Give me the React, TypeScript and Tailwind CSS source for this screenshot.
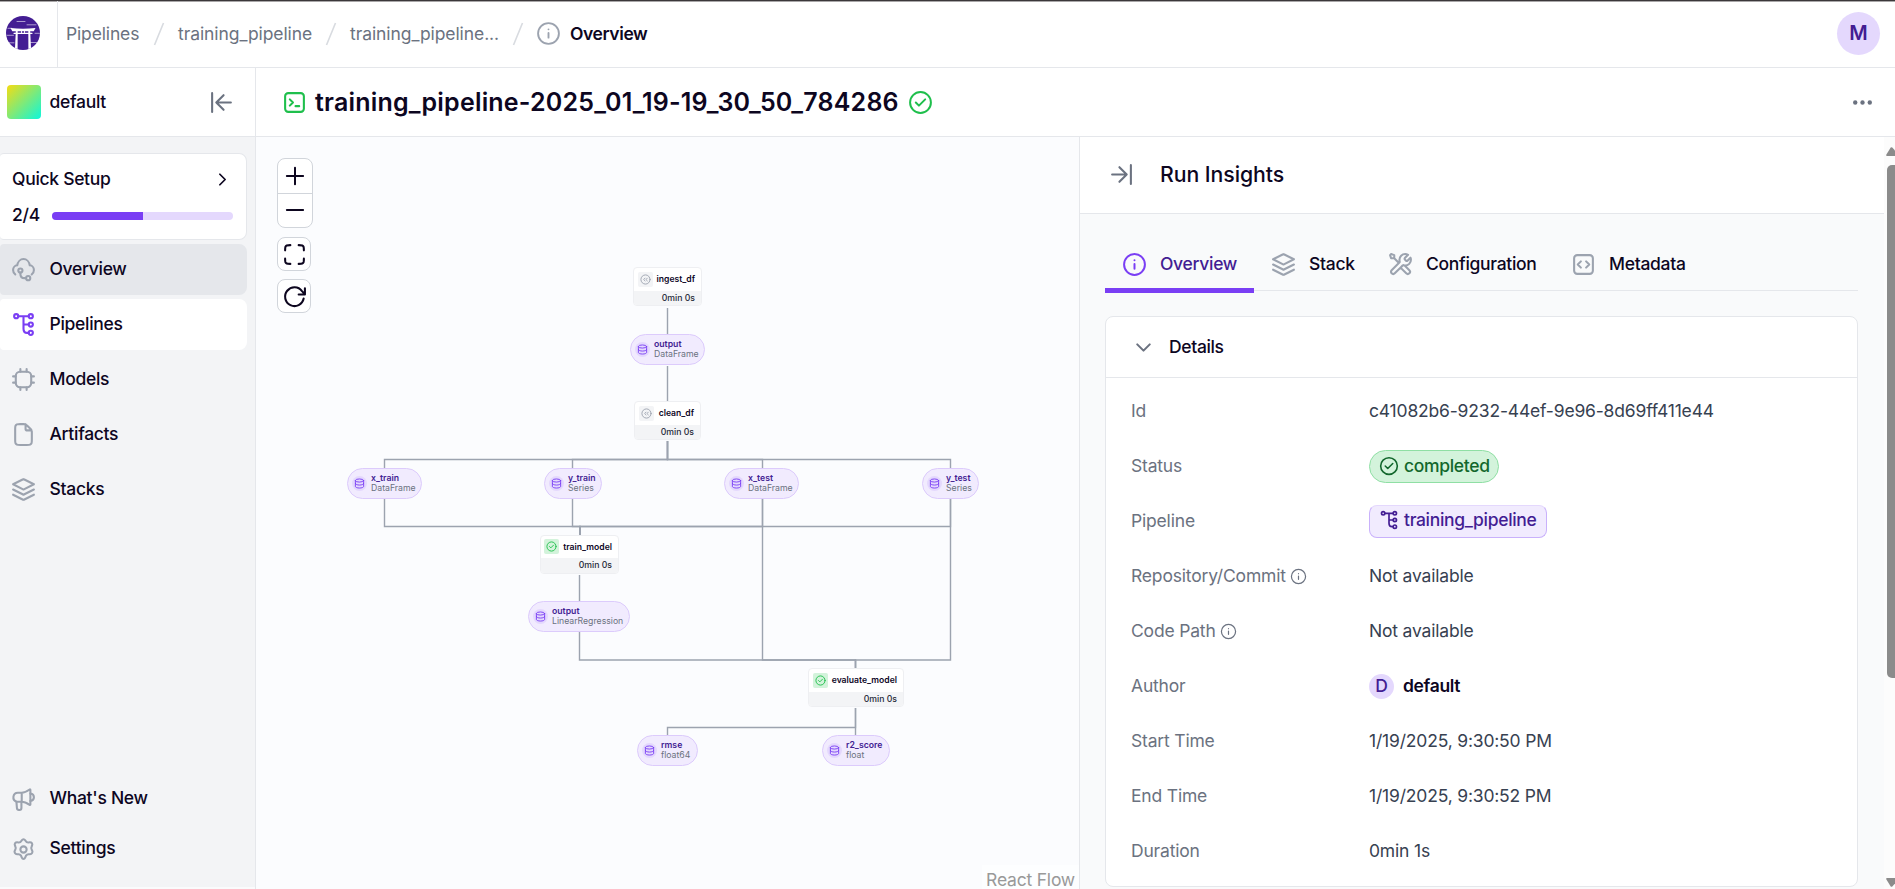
import React from "react";

type IconProps = { className?: string; children?: React.ReactNode; sw?: number };

function Icon({ className, children, sw = 2 }: IconProps) {
  return (
    <svg
      viewBox="0 0 24 24"
      fill="none"
      stroke="currentColor"
      strokeWidth={sw}
      strokeLinecap="round"
      strokeLinejoin="round"
      className={`shrink-0 overflow-visible ${className ?? ""}`}
    >
      {children}
    </svg>
  );
}

const Info = ({ className, sw }: IconProps) => (
  <Icon className={className} sw={sw}>
    <circle cx="12" cy="12" r="10" />
    <path d="M12 16v-4.5M12 8h.01" />
  </Icon>
);
const CheckCircle = ({ className, sw }: IconProps) => (
  <Icon className={className} sw={sw}>
    <circle cx="12" cy="12" r="10" />
    <path d="M7.5 12l3 3 6-6" />
  </Icon>
);
const Layers = ({ className }: IconProps) => (
  <Icon className={className}>
    <path d="M2 12l9.64 4.82c.13.07.2.1.27.11.06.01.12.01.18 0 .07-.01.14-.04.27-.11L22 12M2 17l9.64 4.82c.13.07.2.1.27.11.06.01.12.01.18 0 .07-.01.14-.04.27-.11L22 17M2 7l9.64-4.82c.13-.07.2-.1.27-.11.06-.01.12-.01.18 0 .07.01.14.04.27.11L22 7l-9.64 4.82c-.13.07-.2.1-.27.11a.5.5 0 0 1-.18 0c-.07-.01-.14-.04-.27-.11L2 7z" />
  </Icon>
);
const Dataflow = ({ className }: IconProps) => (
  <Icon className={className}>
    <path d="M7 4h10M12 4v12c0 2.6 1 4 3.5 4H17M12 12h5" />
    <circle cx="5" cy="4" r="2" />
    <circle cx="19" cy="4" r="2" />
    <circle cx="19" cy="12" r="2" />
    <circle cx="19" cy="20" r="2" />
  </Icon>
);
const Cloud = ({ className }: IconProps) => (
  <Icon className={className}>
    <path d="M4.1 16.6C2.8 15.7 2 14.2 2 12.5 2 10.2 3.7 8.2 6 8c.5-3.4 3-6 6-6s5.5 2.6 6 6c2.3.2 4 2.2 4 4.5 0 1.7-.8 3.2-2.1 4.1" />
    <circle cx="9" cy="13" r="2" />
    <circle cx="16.5" cy="20.3" r="2" />
    <path d="M9 15v1.3c0 2.6 1.4 4 4 4h1.5" />
  </Icon>
);
const Chip = ({ className }: IconProps) => (
  <Icon className={className}>
    <rect x="4.6" y="4.6" width="14.8" height="14.8" rx="4" />
    <path d="M9 2v2.5M15 2v2.5M9 19.5V22M15 19.5V22M2 9h2.5M2 15h2.5M19.5 9H22M19.5 15H22" />
  </Icon>
);
const File = ({ className }: IconProps) => (
  <Icon className={className}>
    <path d="M14 2.27V6.4c0 .56 0 .84.11 1.05.1.19.25.35.44.44.21.11.49.11 1.05.11h4.13M20 9.99V17.2c0 1.68 0 2.52-.33 3.16a3 3 0 0 1-1.31 1.31c-.64.33-1.48.33-3.16.33H8.8c-1.68 0-2.52 0-3.16-.33a3 3 0 0 1-1.31-1.31C4 19.72 4 18.88 4 17.2V6.8c0-1.68 0-2.52.33-3.16a3 3 0 0 1 1.31-1.31C6.28 2 7.12 2 8.8 2h3.21c.74 0 1.1 0 1.45.08.3.08.6.2.86.36.31.19.57.45 1.09.96l3.18 3.18c.52.52.78.78.96 1.09.17.26.29.55.36.86.09.35.09.72.09 1.46z" />
  </Icon>
);
const Tool = ({ className }: IconProps) => (
  <Icon className={className}>
    <path d="M6 6L10.5 10.5M6 6H3L2 3L3 2L6 3V6ZM19.259 2.741L16.6314 5.3686C16.2354 5.7646 16.0373 5.9626 15.9632 6.191C15.8979 6.3918 15.8979 6.6082 15.9632 6.809C16.0373 7.0373 16.2354 7.2353 16.6314 7.6314L16.8686 7.8686C17.2646 8.2646 17.4627 8.4626 17.691 8.5368C17.8918 8.6021 18.1082 8.6021 18.309 8.5368C18.5373 8.4626 18.7354 8.2646 19.1314 7.8686L21.5893 5.4108C21.854 6.0549 22 6.7604 22 7.5C22 10.5376 19.5376 13 16.5 13C16.1338 13 15.7759 12.9642 15.4298 12.8959C14.9436 12.8001 14.7005 12.7521 14.5532 12.7668C14.3965 12.7824 14.3193 12.8059 14.1805 12.8802C14.0499 12.9501 13.919 13.081 13.657 13.343L6.5 20.5C5.6716 21.3284 4.3284 21.3284 3.5 20.5C2.6716 19.6716 2.6716 18.3284 3.5 17.5L10.657 10.343C10.919 10.081 11.0499 9.95 11.1198 9.8195C11.1941 9.6807 11.2176 9.6035 11.2332 9.4468C11.2479 9.2995 11.1999 9.0564 11.1041 8.5702C11.0358 8.2241 11 7.8662 11 7.5C11 4.4624 13.4624 2 16.5 2C17.5055 2 18.448 2.2698 19.259 2.741ZM12 15L17.5 20.5C18.3284 21.3283 19.6716 21.3283 20.5 20.5C21.3284 19.6715 21.3284 18.3283 20.5 17.5L15.9753 12.9753C15.655 12.945 15.3427 12.8872 15.0408 12.8043C14.6517 12.6975 14.2249 12.7751 13.9397 13.0603L12 15Z" />
  </Icon>
);
const CodeSquare = ({ className }: IconProps) => (
  <Icon className={className}>
    <rect x="3" y="3" width="18" height="18" rx="3" />
    <path d="M14.5 15L17.5 12L14.5 9M9.5 9L6.5 12L9.5 15" />
  </Icon>
);
const Terminal = ({ className }: IconProps) => (
  <Icon className={className}>
    <rect x="3" y="3" width="18" height="18" rx="3" />
    <path d="M7.5 15L10.5 12L7.5 9M13 15.5h3.5" />
  </Icon>
);
const Megaphone = ({ className }: IconProps) => (
  <Icon className={className}>
    <path d="M10.3 5.5H6.6a4.4 4.4 0 0 0-1.2 8.6h4.9M10.3 5.5c2.6 0 5.2-1.4 7.6-3.1.3-.2.7 0 .7.4v13.9c0 .4-.4.6-.7.4-2.4-1.6-5-3-7.6-3M10.3 5.5v8.6" />
    <path d="M18.6 6.3c2 .3 3.4 1.7 3.4 3.5s-1.4 3.2-3.4 3.5M5.2 14.1l.5 6.2c.1 1 .8 1.7 1.8 1.7h.7c1 0 1.8-.8 1.8-1.8v-6" />
  </Icon>
);
const Gear = ({ className }: IconProps) => (
  <Icon className={className}>
    <circle cx="12" cy="12" r="3" />
    <path d="M10.4 3.1c.8-1.3 2.4-1.3 3.2 0l.5.8c.6 1 1.7 1.5 2.9 1.3l.9-.1c1.8-.2 3.1 1.5 2.3 3.1l-.4.9c-.5 1-.5 2.2.1 3.2l.4.7c.9 1.6-.3 3.6-2.2 3.5l-1 0c-1.1-.1-2.1.5-2.7 1.4l-.8 1.9c-.7 1.6-2.5 1.6-3.2 0l-.8-1.9c-.6-.9-1.6-1.5-2.7-1.4l-1 0c-1.9.1-3.1-1.9-2.2-3.5l.4-.7c.6-1 .6-2.2.1-3.2l-.4-.9c-.8-1.6.5-3.3 2.3-3.1l.9.1c1.2.2 2.3-.3 2.9-1.3z" />
  </Icon>
);
const Database = ({ className }: IconProps) => (
  <Icon className={className}>
    <ellipse cx="12" cy="5.5" rx="9" ry="3.4" />
    <path d="M21 5.5v13c0 1.9-4 3.4-9 3.4s-9-1.5-9-3.4V5.5M21 12c0 1.9-4 3.4-9 3.4S3 13.9 3 12" />
  </Icon>
);
const CachedCircle = ({ className }: IconProps) => (
  <Icon className={className} sw={2}>
    <circle cx="12" cy="12" r="10" />
    <path d="M11 9l-3 3 3 3M16 9l-3 3 3 3" />
  </Icon>
);

function Logo() {
  return (
    <svg viewBox="0 0 34 34" className="h-[34px] w-[34px] shrink-0">
      <circle cx="17" cy="17" r="17" fill="#431d93" />
      <g stroke="#ffffff" fill="none" strokeLinecap="round">
        <path
          d="M11 5.5h8M21 8.8h9M2 12.3h3.5M29 17.3h4.5M1 19.3h6.5M2 26.8h6M24.5 26.5h6"
          strokeWidth="0.7"
          opacity="0.8"
        />
        <path d="M8 17.3h18" strokeWidth="1.2" />
      </g>
      <path d="M4.5 12Q17 13.4 29.5 12l-1.8 3.3H6.3z" fill="#ffffff" />
      <path d="M9.8 15h1.9l-.1 18.1-2.6-.9zM22.3 15h1.9l.8 17.2-2.6.9z" fill="#ffffff" />
      <path d="M15 15h.9v2.4H15zM18.1 15h.9v2.4h-.9z" fill="#ffffff" />
    </svg>
  );
}

const Slash = () => (
  <svg viewBox="0 0 12 24" className="h-6 w-3 shrink-0" stroke="#d8dbe0" strokeWidth="1.6" fill="none">
    <path d="M1.5 23L10.5 1" />
  </svg>
);

function TopBar() {
  return (
    <header className="flex h-[68px] shrink-0 items-center border-b border-t border-b-[#e5e7eb] border-t-[#3b383a] bg-white shadow-[inset_0_1px_0_#a9a7a8]">
      <div className="flex h-full w-[58px] items-center border-r border-[#e5e7eb] pb-0.5 pl-1.5">
        <Logo />
      </div>
      <nav className="flex flex-1 items-center pb-px pl-2 text-[17.5px] leading-6 tracking-[-0.08px] text-[#6b7280]">
        <span className="w-[87px] tracking-[-0.15px]">Pipelines</span>
        <Slash />
        <span className="ml-[13px] w-[147px]">training_pipeline</span>
        <Slash />
        <span className="ml-[13px] w-[162px]">training_pipeline...</span>
        <Slash />
        <Info className="ml-3 h-[25px] w-[25px] text-[#9ca3af]" sw={1.8} />
        <span className="ml-[9px] font-semibold tracking-[-0.4px] text-[#0d061f]">Overview</span>
      </nav>
      <div className="mb-px mr-[15px] flex h-[43px] w-[43px] items-center justify-center rounded-full bg-[#e4d8fd] pb-px text-[20px] font-semibold text-[#431d93]">
        M
      </div>
    </header>
  );
}

const navItems = [
  { label: "Overview", icon: Cloud, row: "bg-[#e5e7eb]", tint: "text-[#9ca3af]" },
  { label: "Pipelines", icon: Dataflow, row: "bg-white", tint: "text-[#7a3ef4]" },
  { label: "Models", icon: Chip, row: "", tint: "text-[#9ca3af]" },
  { label: "Artifacts", icon: File, row: "", tint: "text-[#9ca3af]" },
  { label: "Stacks", icon: Layers, row: "", tint: "text-[#9ca3af]" },
];

function Sidebar() {
  return (
    <aside className="flex w-64 shrink-0 flex-col border-r border-[#e5e7eb] bg-[#f3f4f6] text-[17.5px] font-medium leading-6 tracking-[-0.3px] text-[#0d061f]">
      <div className="flex h-[69px] shrink-0 items-center border-b border-[#e5e7eb] bg-white pl-[7px] pr-[21px]">
        <div className="h-[34px] w-[34px] rounded bg-[linear-gradient(135deg,#f5dc12,#0cf7dc)]" />
        <span className="ml-[8.5px] flex-1 pb-px">default</span>
        <Icon className="h-[25px] w-[25px] text-[#6b7280]">
          <path d="M3 3v18M21 12H7M14 5l-7 7 7 7" />
        </Icon>
      </div>
      <div className="mt-4 flex h-[87px] w-[247px] shrink-0 flex-col justify-between rounded-l-sm rounded-r-lg border border-l-0 border-[#e5e7eb] bg-white pb-3 pl-3 pr-[13px] pt-[13px]">
        <div className="flex items-center justify-between">
          <span>Quick Setup</span>
          <Icon className="h-[21px] w-[21px]">
            <path d="M9 18l6-6-6-6" />
          </Icon>
        </div>
        <div className="flex items-center">
          <span className="w-10">2/4</span>
          <div className="mt-px h-2 flex-1 overflow-hidden rounded-full bg-[#e4d8fd]">
            <div className="h-full w-1/2 bg-[#7a3ef4]" />
          </div>
        </div>
      </div>
      <nav className="mt-1 flex w-[247px] flex-1 flex-col gap-1">
        {navItems.map(({ label, icon: I, row, tint }) => (
          <a key={label} className={`flex h-[51px] items-center rounded-l-sm rounded-r-lg pl-[11px] ${row}`}>
            <I className={`h-[25px] w-[25px] ${tint}`} />
            <span className="ml-[13.5px] pb-px">{label}</span>
          </a>
        ))}
      </nav>
      <div className="flex flex-col pb-[13px]">
        <a className="flex h-[50px] items-center pl-[11px]">
          <Megaphone className="h-[25px] w-[25px] text-[#9ca3af]" />
          <span className="ml-[13.5px] pb-0.5">What&apos;s New</span>
        </a>
        <a className="flex h-[50px] items-center pl-[11px]">
          <Gear className="h-[25px] w-[25px] text-[#9ca3af]" />
          <span className="ml-[13.5px] pb-0.5">Settings</span>
        </a>
      </div>
      <div className="h-0.5 bg-[#fafbfc]" />
    </aside>
  );
}

// Diagram coordinates are relative to the top-left corner of the canvas.
const steps = [
  { name: "ingest_df", x: 377, y: 130, w: 69, cached: true },
  { name: "clean_df", x: 378, y: 264, w: 67, cached: true },
  { name: "train_model", x: 283.5, y: 397.5, w: 79.5, cached: false },
  { name: "evaluate_model", x: 552, y: 531, w: 96, cached: false },
];

const artifacts = [
  { name: "output", type: "DataFrame", x: 374, y: 197, w: 75 },
  { name: "x_train", type: "DataFrame", x: 91, y: 330.5, w: 75 },
  { name: "y_train", type: "Series", x: 288, y: 330.5, w: 58 },
  { name: "x_test", type: "DataFrame", x: 468, y: 330.5, w: 75 },
  { name: "y_test", type: "Series", x: 666, y: 330.5, w: 57 },
  { name: "output", type: "LinearRegression", x: 272, y: 464, w: 102 },
  { name: "rmse", type: "float64", x: 381, y: 598, w: 61 },
  { name: "r2_score", type: "float", x: 566, y: 598, w: 68 },
];

const edges = [
  "M411.5 171V197",
  "M411.5 229V264",
  "M411.5 304V322.5H128.5V331",
  "M411.5 304V322.5H316.5V331",
  "M411.5 304V322.5H506.5V331",
  "M411.5 304V322.5H694.5V331",
  "M128.5 362V389.5H324V398",
  "M316.5 362V389.5H324V398",
  "M506.5 362V389.5H324V398",
  "M694.5 362V389.5H324V398",
  "M323.5 438V464",
  "M323.5 494V523H599.5V531",
  "M506.5 362V523H599.5V531",
  "M694.5 362V523H599.5V531",
  "M599.5 571V598",
  "M599.5 571V590.5H411.5V598",
];

function Graph() {
  return (
    <section className="relative flex w-[823px] shrink-0 flex-col overflow-hidden bg-[#fbfcfe]">
      <div className="flex w-[57px] flex-col gap-2 pl-[21px] pt-[21px] text-[#0d061f]">
        <div className="mb-px flex h-[70px] w-9 flex-col overflow-hidden rounded-lg border border-[#d1d5db] bg-white">
          <button className="flex flex-1 items-center justify-center border-b border-[#d1d5db]">
            <Icon className="h-[26px] w-[26px]" sw={1.9}>
              <path d="M12 4.5v15M4.5 12h15" />
            </Icon>
          </button>
          <button className="flex flex-1 items-center justify-center">
            <Icon className="h-[26px] w-[26px]" sw={1.9}>
              <path d="M4.5 12h15" />
            </Icon>
          </button>
        </div>
        <button className="flex h-[34px] w-[34px] items-center justify-center rounded-lg border border-[#d1d5db] bg-white">
          <Icon className="h-[25px] w-[25px]" sw={2}>
            <path d="M8 3h-.2c-1.7 0-2.5 0-3.2.3a3 3 0 0 0-1.3 1.3C3 5.3 3 6.1 3 7.8V8M8 21h-.2c-1.7 0-2.5 0-3.2-.3a3 3 0 0 1-1.3-1.3C3 18.7 3 17.9 3 16.2V16M21 8v-.2c0-1.7 0-2.5-.3-3.2a3 3 0 0 0-1.3-1.3C18.7 3 17.9 3 16.2 3H16M21 16v.2c0 1.7 0 2.5-.3 3.2a3 3 0 0 1-1.3 1.3c-.7.3-1.5.3-3.2.3H16" />
          </Icon>
        </button>
        <button className="flex h-[34px] w-[34px] items-center justify-center rounded-lg border border-[#d1d5db] bg-white">
          <Icon className="h-[25px] w-[25px]" sw={2}>
            <path d="M22 4v6h-6M22 10l-2.8-3.2A9 9 0 1 0 20.8 14" />
          </Icon>
        </button>
      </div>

      <svg viewBox="0 0 823 752" className="pointer-events-none absolute left-0 top-0 h-[752px] w-[823px]">
        {edges.map((d) => (
          <path key={d} d={d} fill="none" stroke="#9ca3af" strokeWidth="1.4" />
        ))}
      </svg>

      {steps.map((s) => (
        <div
          key={s.name}
          className="absolute flex h-[39px] flex-col overflow-hidden rounded-[4px] border border-[#eeeff2] bg-white"
          style={{ left: s.x, top: s.y, width: s.w }}
        >
          <div className="flex flex-1 items-center justify-between pl-[3.5px] pr-[6px]">
            <span
              className={
                s.cached
                  ? "flex h-[15px] w-[15px] items-center justify-center rounded-[2px] bg-[#f3f4f6] text-[#9ca3af]"
                  : "flex h-[15px] w-[15px] items-center justify-center rounded-[2px] bg-[#d3f3db] text-[#1fbf4c]"
              }
            >
              {s.cached ? <CachedCircle className="h-[11px] w-[11px]" /> : <CheckCircle className="h-[11px] w-[11px]" sw={2} />}
            </span>
            <span className="text-[8.6px] font-semibold leading-[12px] text-[#0d061f]">{s.name}</span>
          </div>
          <div className="flex h-[14.5px] items-center justify-end bg-[#f3f4f6] pr-[6px] text-[8.7px] font-medium leading-[12px] text-[#1f2937]">
            0min 0s
          </div>
        </div>
      ))}

      {artifacts.map((a) => (
        <div
          key={a.name + a.x}
          className="absolute flex h-[31px] items-center rounded-full border border-[#dccbfc] bg-[#f1ebfe] pl-[4px]"
          style={{ left: a.x, top: a.y, width: a.w }}
        >
          <span className="flex h-[15px] w-[15px] shrink-0 items-center justify-center rounded-full bg-[#e4d8fd] text-[#7a3ef4]">
            <Database className="h-[11px] w-[11px]" />
          </span>
          <span className="ml-[4px] flex flex-col pb-px text-[8.7px] leading-[10px]">
            <span className="font-semibold text-[#431d93]">{a.name}</span>
            <span className="text-[#6b7280]">{a.type}</span>
          </span>
        </div>
      ))}

      <div className="absolute bottom-0 right-0 h-6 bg-white/50 pl-1 pr-1 text-[17.5px] leading-[30px] tracking-[-0.2px] text-[#999999]">
        React Flow
      </div>
    </section>
  );
}

const tabs = [
  { label: "Overview", icon: Info, active: true, w: "w-[149px]" },
  { label: "Stack", icon: Layers, active: false, w: "w-[117px]" },
  { label: "Configuration", icon: Tool, active: false, w: "w-[183px]" },
  { label: "Metadata", icon: CodeSquare, active: false, w: "w-[150px]" },
];

function Row({ label, info, children }: { label: string; info?: boolean; children: React.ReactNode }) {
  return (
    <div className="flex h-[55px] items-center">
      <dt className="flex w-[238px] items-center gap-1 pb-px text-[#6b7280]">
        {label}
        {info && <Info className="h-[17px] w-[17px]" sw={1.7} />}
      </dt>
      <dd className="flex items-center pb-px text-[#374151]">{children}</dd>
    </div>
  );
}

function Insights() {
  return (
    <section className="flex min-w-0 flex-1 border-l border-[#e5e7eb] bg-[#f9fafb] text-[17.5px] leading-6 tracking-[-0.18px] text-[#0d061f]">
      <div className="flex w-[804px] shrink-0 flex-col">
        <div className="flex h-[77px] shrink-0 items-center border-b border-[#e5e7eb] bg-white pb-px pl-[29px]">
          <Icon className="h-[25px] w-[25px] text-[#6b7280]">
            <path d="M21 3v18M3 12h14M10 5l7 7-7 7" />
          </Icon>
          <h2 className="ml-[26px] pb-px text-[21.25px] font-medium leading-8 tracking-[-0.05px]">Run Insights</h2>
        </div>
        <div className="ml-[25px] mt-[25px] flex h-[52px] w-[753px] shrink-0 items-start shadow-[inset_0_-1px_0_#e5e7eb]">
          {tabs.map(({ label, icon: I, active, w }) => (
            <a
              key={label}
              className={`flex shrink-0 items-center pl-[17px] pt-0.5 tracking-[-0.3px] ${w} ${active ? "h-[54px] border-b-[5px] border-[#7a3ef4] text-[#431d93]" : "h-[49px]"}`}
            >
              <I className={`h-[25px] w-[25px] ${active ? "text-[#7a3ef4]" : "text-[#9ca3af]"}`} sw={active ? 1.9 : 2} />
              <span className="ml-[13px] pb-px font-medium">{label}</span>
            </a>
          ))}
        </div>
        <div className="ml-[25px] mt-[25px] flex h-[571px] w-[753px] shrink-0 flex-col rounded-lg border border-[#e5e7eb] bg-white">
          <div className="flex h-[61px] shrink-0 items-center border-b border-[#e5e7eb] pl-[25px]">
            <Icon className="h-[25px] w-[25px] text-[#6b7280]">
              <path d="M6 9l6 6 6-6" />
            </Icon>
            <span className="ml-[13px] pb-px font-medium tracking-[-0.35px]">Details</span>
          </div>
          <dl className="flex flex-col pl-[25px] pt-[6px]">
            <Row label="Id">c41082b6-9232-44ef-9e96-8d69ff411e44</Row>
            <Row label="Status">
              <span className="flex h-[33px] items-center gap-[5px] rounded-full border border-[#8fdfa4] bg-[#d3f3db] pl-[9px] pr-2 font-medium tracking-[-0.32px] text-[#12672c]">
                <CheckCircle className="h-[20px] w-[20px]" sw={1.9} />
                <span className="pb-px">completed</span>
              </span>
            </Row>
            <Row label="Pipeline">
              <span className="flex h-[33px] items-center gap-[5px] rounded-lg border border-[#c9b1fb] border-t-[#e4d8fd] bg-[#f1ebfe] pb-0.5 pl-[9px] pr-[9px] font-medium tracking-[-0.32px] text-[#431d93]">
                <Dataflow className="h-[20px] w-[20px]" />
                <span>training_pipeline</span>
              </span>
            </Row>
            <Row label="Repository/Commit" info>
              Not available
            </Row>
            <Row label="Code Path" info>
              Not available
            </Row>
            <Row label="Author">
              <span className="flex h-[25px] w-[25px] items-center justify-center rounded-full bg-[#e4d8fd] font-medium text-[#431d93]">D</span>
              <span className="ml-[9px] font-semibold tracking-[-0.35px] text-[#0d061f]">default</span>
            </Row>
            <Row label="Start Time">1/19/2025, 9:30:50 PM</Row>
            <Row label="End Time">1/19/2025, 9:30:52 PM</Row>
            <Row label="Duration">0min 1s</Row>
          </dl>
        </div>
      </div>
      <div className="flex w-3 flex-col items-end overflow-hidden bg-[#fcfcfc] pl-[3px] pt-2.5">
        <svg viewBox="0 0 9 9" className="h-[9px] w-[9px] shrink-0" fill="#8b8b8b">
          <path d="M4.7 0.6Q5.5 0 6.3 0.6L9 3.5V9H1Q-.3 9 .4 7.5z" />
        </svg>
        <div className="mt-[9px] h-[513px] w-2 shrink-0 rounded-l-[5px] bg-[#8b8b8b]" />
        <svg viewBox="0 0 9 9" className="mt-[200px] h-[9px] w-[9px] shrink-0" fill="#8b8b8b">
          <path d="M4.7 8.4Q5.5 9 6.3 8.4L9 5.5V0H1Q-.3 0 .4 1.5z" />
        </svg>
      </div>
    </section>
  );
}

export default function App() {
  return (
    <div className="flex h-[889px] w-[1895px] flex-col overflow-hidden bg-white font-['Inter',sans-serif]">
      <TopBar />
      <div className="flex min-h-0 flex-1">
        <Sidebar />
        <main className="flex min-w-0 flex-1 flex-col">
          <div className="flex h-[69px] shrink-0 items-center border-b border-[#e5e7eb] bg-white pl-[26px] pr-5">
            <Terminal className="h-[25px] w-[25px] text-[#1fbf4c]" />
            <h1 className="ml-2 text-[25px] font-semibold leading-8 tracking-[0.2px] text-[#0d061f]">
              training_pipeline-2025_01_19-19_30_50_784286
            </h1>
            <CheckCircle className="ml-[9px] h-[25px] w-[25px] text-[#1fbf4c]" sw={1.9} />
            <svg viewBox="0 0 24 24" className="ml-auto h-[25px] w-[25px]" fill="#6b7280">
              <circle cx="5" cy="12" r="2.1" />
              <circle cx="12" cy="12" r="2.1" />
              <circle cx="19" cy="12" r="2.1" />
            </svg>
          </div>
          <div className="flex min-h-0 flex-1">
            <Graph />
            <Insights />
          </div>
        </main>
      </div>
    </div>
  );
}
